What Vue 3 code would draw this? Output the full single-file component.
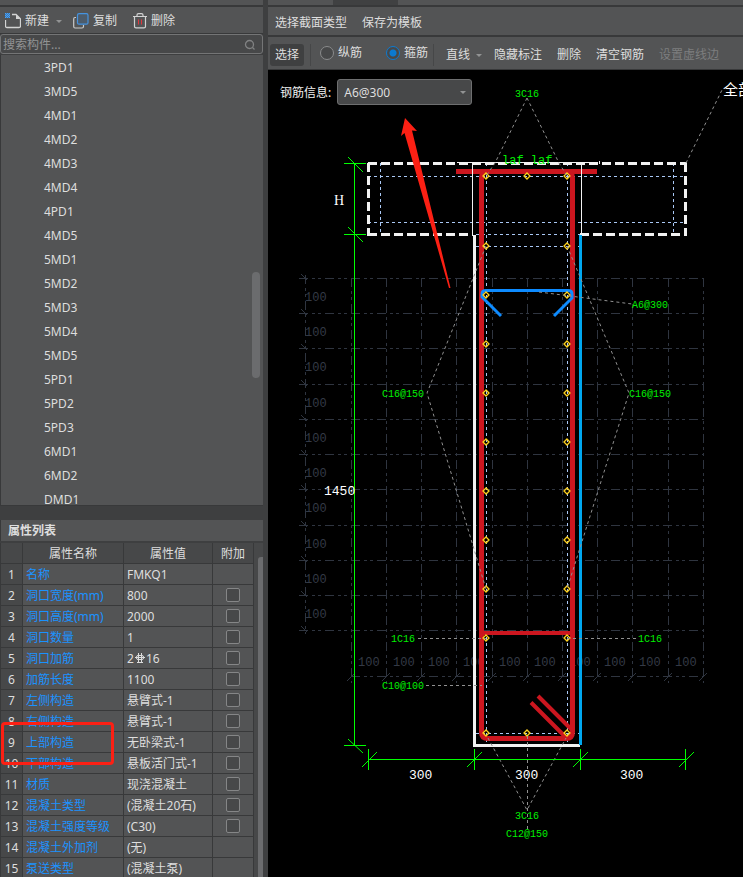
<script setup>
import { ref } from 'vue'

const components = [
  '3PD1', '3MD5', '4MD1', '4MD2', '4MD3', '4MD4', '4PD1', '4MD5', '5MD1', '5MD2',
  '5MD3', '5MD4', '5MD5', '5PD1', '5PD2', '5PD3', '6MD1', '6MD2', 'DMD1',
]

const properties = [
  { name: '名称', value: 'FMKQ1', extra: false },
  { name: '洞口宽度(mm)', value: '800', extra: true },
  { name: '洞口高度(mm)', value: '2000', extra: true },
  { name: '洞口数量', value: '1', extra: true },
  { name: '洞口加筋', value: '2', rebar: '16', extra: true },
  { name: '加筋长度', value: '1100', extra: true },
  { name: '左侧构造', value: '悬臂式-1', extra: true },
  { name: '右侧构造', value: '悬臂式-1', extra: true },
  { name: '上部构造', value: '无卧梁式-1', extra: true },
  { name: '下部构造', value: '悬板活门式-1', extra: true },
  { name: '材质', value: '现浇混凝土', extra: true },
  { name: '混凝土类型', value: '(混凝土20石)', extra: true },
  { name: '混凝土强度等级', value: '(C30)', extra: true },
  { name: '混凝土外加剂', value: '(无)', extra: false },
  { name: '泵送类型', value: '(混凝土泵)', extra: false },
]

const keyword = ref('')
const mode = ref('stirrup')
const rebarInfo = ref('A6@300')

const gridY = [278, 313, 348, 384, 419, 454, 489, 525, 560, 595, 630]
const gridX = [351, 386, 421, 456, 492, 527, 562, 597, 632, 668, 703]
const rowLabels = gridY.slice(0, 10)
const colLabels = gridX.slice(0, 10)

const sideBarsY = [176, 246, 295, 344, 393, 442, 491, 540, 589, 638, 733]
const bars = [
  ...sideBarsY.flatMap((y) => [{ x: 486, y }, { x: 567, y }]),
  { x: 527, y: 176 },
  { x: 527, y: 733 },
]

const leaders = [
  '527,98 495,163 486,176',
  '527,98 559,163 567,176',
  '686,163 722,90',
  '486,246 427,393 486,589',
  '567,246 629,393 567,589',
  '539,292 632,304',
  '418,638.5 486,638.5',
  '567,638.5 636,638.5',
  '426,685.5 482,685.5',
  '488,738 527,810 566,738',
  '527.5,736 527.5,829',
]

const tags = [
  { x: 515, y: 97, text: '3C16' },
  { x: 382, y: 397, text: 'C16@150' },
  { x: 629, y: 397, text: 'C16@150' },
  { x: 632, y: 308, text: 'A6@300' },
  { x: 391, y: 642, text: '1C16' },
  { x: 638, y: 642, text: '1C16' },
  { x: 382, y: 689, text: 'C10@100' },
  { x: 515, y: 819, text: '3C16' },
  { x: 506, y: 837, text: 'C12@150' },
]
</script>

<template>
  <div class="app">
    <aside class="side">
      <div class="strip"></div>
      <div class="side-tools">
        <button type="button" class="tool tool-new">
          <svg width="16" height="16" viewBox="0 0 16 16" fill="none">
            <path d="M7 1.500H11L15.500 6V13Q15.500 14.500 14 14.500H2Q0.500 14.500 0.500 13V7" stroke="#d2d3d3" stroke-width="1.300" />
            <path d="M11 1.500V6H15.500Z" fill="#d2d3d3" />
            <rect width="5" height="5" fill="#3a76b4" />
            <path d="M0 0h1v1h-1zM2 0h1v1h-1zM4 0h1v1h-1zM1 1h1v1h-1zM3 1h1v1h-1zM0 2h1v1h-1zM2 2h1v1h-1zM4 2h1v1h-1zM1 3h1v1h-1zM3 3h1v1h-1zM0 4h1v1h-1zM2 4h1v1h-1zM4 4h1v1h-1z" fill="#4aa3f5" />
          </svg>
          新建
          <i class="caret"></i>
        </button>
        <button type="button" class="tool tool-copy">
          <svg width="16" height="16" viewBox="0 0 16 16" fill="none">
            <path d="M3 4.500H2Q0.700 4.500 0.700 6V13.500Q0.700 15 2 15H9Q10.500 15 10.500 13.500V12" stroke="#c8c9c9" stroke-width="1.200" />
            <rect x="4.500" y="0.700" width="10.500" height="10.500" rx="1.500" fill="#4d5c6b" stroke="#4593e0" stroke-width="1.200" />
          </svg>
          复制
        </button>
        <button type="button" class="tool">
          <svg width="14" height="16" viewBox="0 0 14 16" fill="none">
            <path d="M0 3.500H14M4 3.500V2Q4 0.700 5.500 0.700H8.500Q10 0.700 10 2V3.500M1.500 3.500V13.500Q1.500 14.800 3 14.800H11Q12.500 14.800 12.500 13.500V3.500" stroke="#d2d3d3" stroke-width="1.200" />
            <path d="M5.500 6.500V11.500M8.500 6.500V11.500" stroke="#e0383e" />
          </svg>
          删除
        </button>
      </div>
      <div class="search">
        <input v-model="keyword" type="text" placeholder="搜索构件..." aria-label="搜索构件" />
        <svg width="12" height="12" viewBox="0 0 12 12" fill="none" stroke="#818283" stroke-width="1.300">
          <circle cx="5.500" cy="5.500" r="4" />
          <path d="M8.500 8.500L10.500 10.500" />
        </svg>
      </div>
      <div class="tree">
        <ul>
          <li v-for="item in components" :key="item">{{ item }}</li>
        </ul>
        <div class="tree-thumb"></div>
      </div>
      <section class="props">
        <h2>属性列表</h2>
        <div class="props-body">
          <table>
            <colgroup>
              <col class="col-index" />
              <col class="col-name" />
              <col class="col-value" />
              <col class="col-extra" />
            </colgroup>
            <thead>
              <tr>
                <th></th>
                <th>属性名称</th>
                <th>属性值</th>
                <th>附加</th>
              </tr>
            </thead>
            <tbody>
              <tr v-for="(p, i) in properties" :key="p.name">
                <td class="index">{{ i + 1 }}</td>
                <td class="name">{{ p.name }}</td>
                <td class="value">
                  {{ p.value }}<template v-if="p.rebar"><svg class="rebar" width="12" height="11" viewBox="0 0 12 11" fill="none" stroke="#dcdcdc">
                    <rect x="2.500" y="2.500" width="7" height="4" rx="1.500" />
                    <path d="M4.500 0V9M7.500 0V9M1 4.500H11M3 9.500H9" />
                  </svg>{{ p.rebar }}</template>
                </td>
                <td class="extra">
                  <input v-if="p.extra" type="checkbox" :aria-label="p.name + ' 附加'" />
                </td>
              </tr>
            </tbody>
          </table>
          <div class="props-track"><div class="props-thumb"></div></div>
          <div class="highlight"></div>
        </div>
      </section>
    </aside>

    <main class="main">
      <div class="strip tabs"><div class="tab"></div></div>
      <div class="bar bar-top">
        <button type="button">选择截面类型</button>
        <button type="button">保存为模板</button>
      </div>
      <div class="bar bar-tools">
        <button type="button" class="active">选择</button>
        <div class="modes">
          <label><input v-model="mode" type="radio" name="mode" value="longitudinal" />纵筋</label>
          <label><input v-model="mode" type="radio" name="mode" value="stirrup" />箍筋</label>
        </div>
        <button type="button" class="line-tool">直线<i class="caret"></i></button>
        <button type="button">隐藏标注</button>
        <button type="button">删除</button>
        <button type="button">清空钢筋</button>
        <button type="button" disabled>设置虚线边</button>
      </div>
      <div class="canvas">
        <svg class="drawing" width="100%" height="100%">
          <g transform="translate(-268 -70)">
            <g class="grid">
              <path v-for="y in gridY" :key="'h' + y" :d="`M299 ${y}.5H704`" />
              <path v-for="x in gridX" :key="'v' + x" :d="`M${x}.5 278V683`" />
              <path d="M305.500 275V634M351 676.500H704" />
              <g class="ticks">
                <path v-for="y in gridY" :key="'ty' + y" :d="`M301 ${y - 4}L307 ${y + 2}`" />
                <path v-for="x in gridX" :key="'tx' + x" :d="`M${x - 4} 681L${x + 4} 673`" />
              </g>
            </g>
            <g class="grid-text">
              <text v-for="y in rowLabels" :key="'ly' + y" x="305" :y="y + 23">100</text>
              <text v-for="x in colLabels" :key="'lx' + x" :x="x + 7" y="666">100</text>
            </g>

            <g class="cover">
              <path d="M368 176.500H686M368 222.500H686M476 234.500H580M476 246.500H580M476 733.500H580" />
              <path d="M380.500 163V235M673.500 163V235M486.500 163V745M567.500 163V745" />
            </g>

            <path class="stirrup" d="M456 171.500H597" />
            <path class="stirrup" d="M488 171.500Q481.500 171.500 481.500 178V732Q481.500 738.500 488 738.500H566Q572.500 738.500 572.500 732V178Q572.500 171.500 566 171.500" />
            <path class="stirrup thin" d="M482 633H572M531 702.500L566 737.500M538 696L572 730" />

            <g class="outline">
              <path class="flange" d="M368 163.500H687M368 234.500H473M580 234.500H687" />
              <path class="flange" d="M368.500 163V236M685.500 163V236" />
              <path d="M474.500 235V745.500H580" stroke-width="3" />
              <path d="M472.500 163V235M581.500 163V235M457 162.500H597M599.500 161V164" stroke-width="1" />
            </g>
            <path class="web-edge" d="M580.500 235V745" />

            <path class="tie" d="M501 316L482 297V294Q482 290.500 486 290.500H568Q572 290.500 572 294V298L554 316" />

            <g class="bar-dots">
              <path
                v-for="b in bars"
                :key="b.x + '-' + b.y"
                :d="`M${b.x} ${b.y - 3}L${b.x + 3} ${b.y}L${b.x} ${b.y + 3}L${b.x - 3} ${b.y}Z`"
              />
            </g>

            <g class="leaders">
              <polyline v-for="points in leaders" :key="points" :points="points" />
            </g>

            <g class="dimension">
              <path d="M354.500 163V745M344 163.500H366M344 234.500H366M344 745.500H366" />
              <path d="M348 157L363 172M348 227L363 242M348 739L363 753" />
              <path d="M368 759.500H686M368.500 749V770M474.500 749V770M580.500 749V770M685.500 749V770" />
              <path d="M362 767L377 752M467 767L482 752M573 767L588 752M679 767L694 752" />
            </g>

            <g class="tags">
              <text v-for="(t, i) in tags" :key="i" :x="t.x" :y="t.y">{{ t.text }}</text>
            </g>
            <text class="laf" x="502" y="164">laf laf</text>
            <g class="sizes">
              <text x="324" y="495">1450</text>
              <text x="409" y="779">300</text>
              <text x="515" y="779">300</text>
              <text x="620" y="779">300</text>
              <text class="letter" x="334" y="205">H</text>
            </g>
            <text class="all" x="723" y="95">全部</text>

            <path class="arrow" d="M405 118L417 131L412 130.500L450.500 288L449 288L404.500 133L401 136Z" />
          </g>
        </svg>
        <div class="info">
          <label for="rebar-info">钢筋信息:</label>
          <div class="picker">
            <select id="rebar-info" v-model="rebarInfo">
              <option>A6@300</option>
            </select>
            <i class="caret"></i>
          </div>
        </div>
      </div>
    </main>
  </div>
</template>

<style>
body {
  margin: 0;
  background: #3e3f40;
}
</style>

<style scoped>
.app {
  display: grid;
  grid-template-columns: 263px minmax(0, 1fr);
  column-gap: 5px;
  height: 100vh;
  overflow: hidden;
  background: #3e3f40;
  color: #dedede;
  font: 12px/16px 'Noto Sans', 'Noto Sans CJK SC', sans-serif;
}

button,
input,
select {
  font: inherit;
  color: inherit;
  margin: 0;
}

button {
  display: flex;
  align-items: center;
  padding: 0;
  border: 0;
  background: none;
  white-space: nowrap;
}

.caret {
  width: 0;
  height: 0;
  border: 3px solid transparent;
  border-top-color: #929394;
  border-bottom-width: 0;
}

.strip {
  height: 5px;
  flex: none;
  background: #535455;
  border-bottom: 2px solid #38393a;
}

/* Component list */
.side {
  display: flex;
  flex-direction: column;
  min-width: 0;
  min-height: 0;
}

.side-tools {
  display: flex;
  align-items: center;
  gap: 16px;
  box-sizing: border-box;
  height: 27px;
  flex: none;
  padding: 2px 5px 0;
  background: #535455;
  border-bottom: 1px solid #38393a;
}

.tool {
  gap: 4px;
}

.tool .caret {
  margin-left: 3px;
}

.tool-new {
  margin-right: -5px;
}

.search {
  display: flex;
  align-items: center;
  flex: none;
  box-sizing: border-box;
  height: 20px;
  padding: 1px 6px 0 2px;
  background: #474849;
  border: 1px solid #747576;
  border-radius: 3px;
}

.search input {
  flex: 1;
  min-width: 0;
  height: 16px;
  padding: 0;
  border: 0;
  outline: 0;
  background: none;
}

.search input::placeholder {
  color: #929394;
  opacity: 1;
}

.tree {
  position: relative;
  flex: 1;
  min-height: 0;
  margin-top: 1px;
  overflow: hidden;
  background: #535455;
  border-left: 1px solid #38393a;
  border-bottom: 1px solid #38393a;
}

.tree ul {
  margin: 0;
  padding: 1px 0 0;
  list-style: none;
}

.tree li {
  padding-left: 43px;
  line-height: 24px;
}

.tree-thumb {
  position: absolute;
  top: 217px;
  right: 3px;
  width: 8px;
  height: 106px;
  border-radius: 4px;
  background: #6b6c6e;
}

/* Property list */
.props {
  flex: none;
  height: 357px;
  margin-top: 14px;
}

.props h2 {
  margin: 0 0 2px;
  padding-left: 7px;
  font-size: 12px;
  line-height: 21px;
  background: #535455;
  border-left: 1px solid #38393a;
}

.props-body {
  position: relative;
  display: flex;
  height: 334px;
  overflow: hidden;
  border-left: 1px solid #38393a;
}

table {
  flex: none;
  width: 253px;
  table-layout: fixed;
  border-collapse: separate;
  border-spacing: 0;
  align-self: flex-start;
}

.col-index { width: 22px; }
.col-name { width: 101px; }
.col-value { width: 89px; }
.col-extra { width: 41px; }

th,
td {
  box-sizing: border-box;
  height: 21px;
  padding: 2px 3px 0;
  line-height: 16px;
  white-space: nowrap;
  background: #535455;
  border-right: 1px solid #38393a;
  border-bottom: 1px solid #38393a;
}

th,
td.index {
  font-weight: normal;
  text-align: center;
  background: #474849;
}

td.index {
  padding: 2px 0 0;
}

td.name {
  color: #1b92ff;
}

.rebar {
  vertical-align: -1px;
}

td.extra {
  padding-top: 0;
}

td.extra input {
  appearance: none;
  display: block;
  box-sizing: border-box;
  width: 14px;
  height: 14px;
  margin: 0 auto;
  border: 1px solid #858687;
  border-radius: 2px;
  background: #474849;
}

.props-track {
  flex: 1;
  padding: 14px 0 0 4px;
  background: #474849;
}

.props-thumb {
  height: 100%;
  border-radius: 3px 0 0 0;
  background: #6b6c6e;
}

.highlight {
  position: absolute;
  top: 179px;
  left: 0;
  box-sizing: border-box;
  width: 113px;
  height: 43px;
  border: 3px solid #fc2014;
  border-radius: 4px;
}

/* Section editor */
.main {
  display: flex;
  flex-direction: column;
  min-width: 0;
  min-height: 0;
}

.tabs {
  display: flex;
}

.tab {
  width: 65px;
  margin-left: 65px;
  background: #404142;
}

.bar {
  display: flex;
  align-items: center;
  flex: none;
  box-sizing: border-box;
  overflow: hidden;
  background: #535455;
}

.bar-top {
  gap: 15px;
  height: 30px;
  padding: 4px 0 0 7px;
  border-bottom: 2px solid #38393a;
}

.bar-tools {
  gap: 15px;
  height: 33px;
  padding: 4px 0 0 2px;
  border-bottom: 1px solid #38393a;
}

.bar-tools > .active {
  height: 22px;
  padding: 0 5px;
  margin-right: -9px;
  border-radius: 3px;
  background: #3f4041;
}

.modes {
  display: flex;
  gap: 24px;
  padding: 1px 5px 5px 9px;
  margin-right: -3px;
  border: solid #464748;
  border-width: 0 1px;
}

.modes label {
  display: flex;
  align-items: center;
  gap: 4px;
}

.modes input {
  appearance: none;
  box-sizing: border-box;
  width: 14px;
  height: 14px;
  border: 1px solid #8a8b8c;
  border-radius: 50%;
  background: #474849;
}

.modes input:checked {
  border-color: #0b7ad1;
  background: radial-gradient(circle, #0b7ad1 3px, #474849 4px);
}

.line-tool {
  gap: 6px;
  margin-right: -3px;
}

.bar button:disabled {
  color: #7d7e7f;
}

.canvas {
  position: relative;
  flex: 1;
  min-height: 0;
  overflow: hidden;
  background: #000;
}

.info {
  position: absolute;
  top: 9px;
  left: 12px;
  display: flex;
  align-items: center;
  gap: 6px;
  color: #f0f0f0;
}

.info label {
  padding-top: 2px;
}

.picker {
  position: relative;
}

.picker select {
  appearance: none;
  display: block;
  box-sizing: border-box;
  width: 135px;
  height: 26px;
  padding: 2px 6px 0;
  border: 1px solid #6e6f70;
  border-radius: 3px;
  background: #474849;
  color: #dedede;
}

.picker .caret {
  position: absolute;
  top: 12px;
  right: 6px;
}

/* Drawing */
.drawing {
  position: absolute;
  inset: 0;
  font-family: 'Liberation Mono', 'Noto Sans CJK SC', monospace;
}

.drawing path,
.drawing polyline {
  fill: none;
}

.grid {
  stroke: #2f3540;
  stroke-dasharray: 9 4 3 3 3 4;
}

.ticks {
  stroke-dasharray: none;
}

.grid-text {
  fill: #343a46;
  font-size: 12px;
}

.cover {
  stroke: #a9c8f5;
  stroke-dasharray: 3 3;
}

.stirrup {
  stroke: #cc161f;
  stroke-width: 5;
}

.stirrup.thin {
  stroke-width: 4;
}

.outline {
  stroke: #f2f2f2;
}

.flange {
  stroke-width: 3;
  stroke-dasharray: 9 4;
}

.web-edge {
  stroke: #00a8f0;
  stroke-width: 3;
}

.tie {
  stroke: #0d8bff;
  stroke-width: 3;
}

.bar-dots {
  stroke: #ffd21e;
  stroke-width: 1.3;
}

.leaders {
  stroke: #909090;
  stroke-dasharray: 3 3;
}

.dimension {
  stroke: #00ff00;
}

.tags,
.laf {
  fill: #00f000;
  font-size: 10px;
}

.laf {
  font-size: 12px;
}

.sizes {
  fill: #fff;
  font-size: 13px;
}

.letter {
  font-family: 'Liberation Serif', serif;
  font-size: 14px;
}

.all {
  fill: #fff;
  font-size: 15px;
}

.drawing .arrow {
  fill: #fc2014;
}
</style>
